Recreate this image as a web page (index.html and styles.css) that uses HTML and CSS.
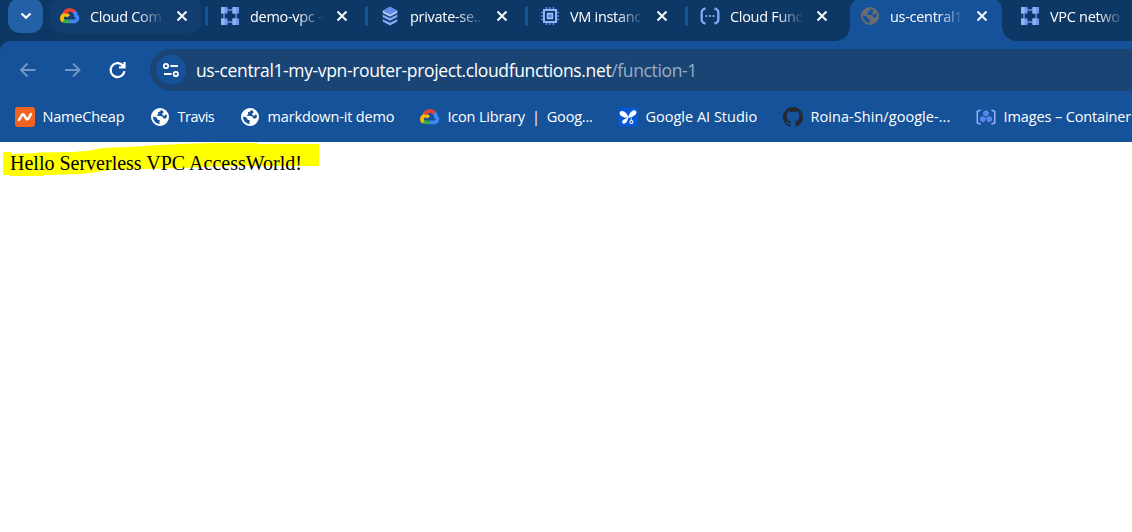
FILE: index.html
```html
<!DOCTYPE html>
<html lang="en">
<head>
<meta charset="utf-8">
<title>us-central1-my-vpn-router-project.cloudfunctions.net/function-1</title>
<link rel="stylesheet" href="styles.css">
</head>
<body>
<svg class="symbols" aria-hidden="true">
  <defs>
    <symbol id="cloud" viewBox="0 0 20 20">
      <g fill="none" stroke-width="3.800">
        <path stroke="#4285f4" d="M13.500 5.300Q15.900 7 15.900 9.600A3.100 3.100 0 0 1 14.900 15.300H10"/>
        <path stroke="#34a853" d="M10.200 15.300H5.600Q4.200 15.300 3.200 14.500"/>
        <path stroke="#fbbc04" d="M3.400 14.900A3.500 3.500 0 0 1 5.700 8.600Q7.500 8.700 8.600 10.300"/>
        <path stroke="#ea4335" d="M4.300 7.300A6.100 6.100 0 0 1 14.200 5.900"/>
      </g>
    </symbol>
    <symbol id="vpc" viewBox="0 0 20 20">
      <path fill="none" stroke="#6b95eb" stroke-width="1.500" d="M4 4h12v12H4z"/>
      <path fill="#7199ec" d="M1 1h6.500v6.500H1zM12.500 1H19v6.500h-6.500zM1 12.500h6.500V19H1zM12.500 12.500H19V19h-6.500z"/>
      <path fill="#92b0f3" d="M1 1h3.500v6.500H1zM12.500 1H16v6.500h-3.500zM1 12.500h3.500V19H1zM12.500 12.500H16V19h-3.500z"/>
    </symbol>
    <symbol id="stack" viewBox="0 0 20 20">
      <path fill="#85aaf5" d="m2.700 13.200 7.300 3.300 7.300-3.300v2.300L10 19.500l-7.300-4zM2.700 8.300l7.300 3.400 7.300-3.400v3L10 15.200l-7.300-3.900z"/>
      <path fill="#5f8cec" d="m10 .5 7.300 3.900L10 8.300 2.700 4.400z"/><path fill="#a8c5fa" d="M2.700 4.400 10 8.300l7.300-3.900v2.900L10 11.200 2.700 7.300z"/>
      <path fill="none" stroke="#0d3764" stroke-width="1.100" d="M2.700 7.800l7.300 3.700 7.300-3.700M2.700 11.900l7.300 3.700 7.300-3.700"/>
    </symbol>
    <symbol id="chip" viewBox="0 0 20 20">
      <path stroke="#5685ea" stroke-width="1.600" d="M6.500 1v18M10 1v18M13.500 1v18M1 6.500h18M1 10h18M1 13.500h18"/>
      <path fill="#0d3764" stroke="#91b4f8" stroke-width="2" d="M4 4h12v12H4z"/>
      <path fill="#5c8bee" stroke="#a6c3fa" stroke-width="1.300" d="M7.500 7.500h5v5h-5z"/>
    </symbol>
    <symbol id="func" viewBox="0 0 20 20">
      <path fill="none" stroke="#86a5f0" stroke-width="2.400" stroke-linejoin="round" d="M5.500 2.500 3.500 3.200Q1.700 4.300 1.700 6v8q0 1.700 1.800 2.800l2 .7M14.500 2.500l2 .7q1.800 1.100 1.800 2.800v8q0 1.700-1.800 2.800l-2 .7"/>
      <g fill="#91b3f8"><circle cx="6.500" cy="10" r="1.100"/><circle cx="10" cy="10" r="1.100"/><circle cx="13.500" cy="10" r="1.100"/></g>
    </symbol>
    <symbol id="globe" viewBox="0 0 20 20">
      <circle cx="10" cy="10" r="8" fill="none" stroke="currentColor" stroke-width="2"/>
      <path fill="currentColor" d="M2 9C3 4.500 6 2 11 2L10.600 4.200 8 5.300 8.200 7.300 6.300 8.800 11 8.900q2.300.4 2.300 2.500h2.200l2.600-2.500Q17.500 16 11.500 17.800L9.200 16l.8-2.500-2.400-.8L6.600 10.500z"/>
      <path fill="currentColor" d="M12 2.300Q16.500 3.500 17.700 8l-2.500-.5-.8 1.500-2.200-1 .4-2 1.200-.6z"/>
    </symbol>
    <symbol id="close" viewBox="0 0 12 12"><path fill="none" stroke="#fff" stroke-width="1.900" d="m1.500 1.500 9 9m0-9-9 9"/></symbol>
  </defs>
</svg>
<header class="browser">
  <nav class="tabs">
    <button class="tab-search" aria-label="Search tabs"><svg viewBox="0 0 12 8"><path d="m1.500 1.500 4.500 4.300 4.500-4.300"/></svg></button>
    <div class="tab hovered"><svg class="icon"><use href="#cloud"/></svg><span class="title">Cloud Com</span><svg class="close"><use href="#close"/></svg></div>
    <div class="tab divided"><svg class="icon"><use href="#vpc"/></svg><span class="title">demo-vpc –</span><svg class="close"><use href="#close"/></svg></div>
    <div class="tab divided"><svg class="icon"><use href="#stack"/></svg><span class="title">private-se..</span><svg class="close"><use href="#close"/></svg></div>
    <div class="tab divided"><svg class="icon"><use href="#chip"/></svg><span class="title">VM instanc</span><svg class="close"><use href="#close"/></svg></div>
    <div class="tab divided"><svg class="icon"><use href="#func"/></svg><span class="title">Cloud Func</span><svg class="close"><use href="#close"/></svg></div>
    <div class="tab active"><svg class="icon"><use href="#globe"/></svg><span class="title">us-central1</span><svg class="close"><use href="#close"/></svg></div>
    <div class="tab"><svg class="icon"><use href="#vpc"/></svg><span class="title">VPC netwo</span></div>
  </nav>
  <div class="chrome">
    <div class="toolbar">
      <svg class="nav dim" viewBox="0 0 20 20"><path d="M17.500 10H3M9.500 3.500 3 10l6.500 6.500"/></svg>
      <svg class="nav dim" viewBox="0 0 20 20"><path d="M2 10H16.500M10 3.500 16.500 10l-6.500 6.500"/></svg>
      <svg class="nav" viewBox="0 0 20 20"><path d="M16.500 11.200A7 7 0 1 1 14.500 5.100L16.500 7.200M16.500 2v5.400h-5.400"/></svg>
      <div class="address">
        <span class="site"><svg viewBox="0 0 18 16"><path d="M8.500 4h7.500M2 12h7.500"/><circle cx="4" cy="4" r="2.200"/><circle cx="13.800" cy="12" r="2.200"/></svg></span>
        <span class="url">us-central1-my-vpn-router-project.cloudfunctions.net<span class="path">/function-1</span></span>
      </div>
    </div>
    <div class="bookmarks">
      <a class="bookmark namecheap"><svg class="icon" viewBox="0 0 20 20"><rect width="20" height="20" rx="3" fill="#f26322"/><path fill="none" stroke="#fff" stroke-width="2.500" stroke-linecap="round" stroke-linejoin="round" d="m4 13 3-5.200q1-1.200 2 .2l2.200 3.700q1 1.300 2 .1L16 7"/></svg><span>NameCheap</span></a>
      <a class="bookmark travis"><svg class="icon"><use href="#globe"/></svg><span>Travis</span></a>
      <a class="bookmark markdown"><svg class="icon"><use href="#globe"/></svg><span>markdown-it demo</span></a>
      <a class="bookmark library"><svg class="icon"><use href="#cloud"/></svg><span>Icon Library&nbsp; |&nbsp; Goog...</span></a>
      <a class="bookmark studio"><svg class="icon" viewBox="0 0 20 20"><rect x=".5" y=".5" width="19" height="19" rx="1.500" fill="#0758d6"/><path fill="#fff" d="M10.500 10.800Q7 11.200 3.300 9C.5 6.800 1.500 3.700 4.500 4.100Q8.800 5 10.500 10.800ZM10 11q1-5.500 5-7.500c3-1 4.500 1.700 2.500 4.300Q14 11 10 11ZM10.300 10.800Q9.400 15.200 6.700 16.600c-2.700.7-3.400-2.200-1.200-3.900Q7.500 11.300 10.300 10.800Z"/><circle cx="13.400" cy="15" r="1.500" fill="#0758d6" stroke="#fff" stroke-width="1.100"/><circle cx="13.300" cy="12" r=".8" fill="#fff"/></svg><span>Google AI Studio</span></a>
      <a class="bookmark github"><svg class="icon" viewBox="0 0 16 16"><path fill="#24292f" d="M8 0C3.580 0 0 3.580 0 8c0 3.540 2.290 6.530 5.470 7.590.4.070.55-.17.55-.38 0-.19-.01-.82-.01-1.490-2.010.37-2.530-.49-2.690-.94-.09-.23-.48-.94-.82-1.130-.28-.15-.68-.52-.01-.53.63-.01 1.080.58 1.230.82.72 1.210 1.870.87 2.330.66.070-.52.28-.87.51-1.070-1.780-.2-3.640-.89-3.640-3.950 0-.87.31-1.590.82-2.150-.08-.2-.36-1.020.08-2.120 0 0 .67-.21 2.200.82.64-.18 1.320-.27 2-.27s1.360.09 2 .27c1.530-1.040 2.200-.82 2.200-.82.44 1.100.16 1.920.08 2.120.51.56.82 1.270.82 2.150 0 3.070-1.870 3.750-3.650 3.950.29.25.54.73.54 1.480 0 1.070-.01 1.930-.01 2.200 0 .21.15.46.55.38A8.010 8.010 0 0 0 16 8c0-4.420-3.580-8-8-8z"/></svg><span>Roina-Shin/google-...</span></a>
      <a class="bookmark images"><svg class="icon" viewBox="0 0 20 20"><path fill="none" stroke="#8eafff" stroke-width="1.600" d="M4.500 3 1.300 4.500v11.200l3.200 1.600M15.500 3l3.200 1.500v11.200l-3.200 1.600"/><g fill="#4f83f1" stroke="#86a8fa" stroke-width=".6"><path d="m10 3.700 2.300 1.200v2.700L10 8.900 7.700 7.600V4.900zM6.800 9.500l2.300 1.200v2.700l-2.300 1.300-2.300-1.300v-2.700zM13.200 9.500l2.300 1.200v2.700l-2.300 1.300-2.300-1.300v-2.700z"/></g></svg><span>Images – Container</span></a>
    </div>
  </div>
</header>
<main class="page">
  <svg class="marker" viewBox="0 0 330 40"><path fill="#ff0" d="M3 10h8l1 2 24-1 1-.5 36-.5 17-1.500 12-2.500 35-1.500 22-1.500 33-1.500 21-.500h44l1 1h61V24h-86l-19 .5-32 1.500-33 1-29 .5-14 1-16 2.500-9 1-37 1-1 1H9V33H3z"/></svg>
  <p class="message">Hello Serverless VPC AccessWorld!</p>
</main>
</body>
</html>
```
FILE: styles.css
```css
* { box-sizing: border-box; }
body { margin: 0; height: 532px; overflow: hidden; background: #fff; font-family: "Open Sans", "Noto Sans", sans-serif; color: #fff; }
svg { display: block; flex: none; }
.symbols { position: absolute; width: 0; height: 0; }
.browser { width: 1132px; overflow: hidden; background: #0d3764; }
.tabs { display: flex; height: 41px; padding-left: 8px; }
.tab-search { display: flex; flex: none; align-items: center; justify-content: center; width: 35px; height: 35px; margin: -2px 7px 0 0; padding: 0; border: 0; border-radius: 12px; background: #2460a5; }
.tab-search svg { width: 12px; height: 8px; fill: none; stroke: #fff; stroke-width: 2.2; }
.tab { position: relative; display: flex; flex: none; align-items: center; width: 152px; height: 35px; margin: -2px 8px 0 0; padding: 1px 0 0 10px; border-radius: 12px; }
.tab.hovered { background: #123d6f; }
.tab .icon { width: 20px; height: 20px; margin-right: 10px; }
.tab .title { width: 74px; margin-right: 12px; padding-top: 1px; overflow: hidden; white-space: nowrap; font-size: 14.5px; line-height: 22px; letter-spacing: -.3px; -webkit-mask-image: linear-gradient(90deg, #000 64%, transparent); mask-image: linear-gradient(90deg, #000 64%, transparent); }
.tab .close { width: 12px; height: 12px; }
.divided::after, .hovered::after { content: ""; position: absolute; left: 155px; top: 8px; width: 3px; height: 20px; border-radius: 2px; background: #15539a; }
.tab:nth-child(6)::after { display: none; }
.tab.active { height: 43px; padding-bottom: 8px; border-radius: 12px 12px 0 0; background: #155299; }
.tab.active .icon { color: #696d72; }
.active::before, .active::after { content: ""; position: absolute; bottom: 0; width: 14px; height: 14px; }
.active::before { left: -14px; background: radial-gradient(circle at 0 0, transparent 13.5px, #155299 14px); }
.active::after { right: -14px; background: radial-gradient(circle at 100% 0, transparent 13.5px, #155299 14px); }
.chrome { height: 101px; border-radius: 10px 0 0; background: #155299; }
.toolbar { display: flex; align-items: center; height: 50px; padding: 8px 0 0 18px; }
.nav { width: 20px; height: 20px; margin-right: 25px; fill: none; stroke: #fff; stroke-width: 2.2; }
.nav.dim { stroke: #7396c2; stroke-width: 1.9; }
.address { display: flex; flex: 1; align-items: center; height: 42px; margin-left: -3px; padding-left: 6px; border-radius: 21px 0 0 21px; background: #1a4474; }
.site { display: flex; align-items: center; justify-content: center; width: 30px; height: 30px; margin-right: 10px; border-radius: 50%; background: #155299; }
.site svg { width: 18px; height: 16px; fill: none; stroke: #fff; stroke-width: 1.8; }
.url { font-size: 17.5px; line-height: 28px; letter-spacing: -.37px; white-space: nowrap; }
.path { color: #9badc5; }
.bookmarks { display: flex; align-items: center; height: 51px; padding-left: 15px; }
.bookmark { display: flex; flex: none; align-items: center; gap: 7.5px; white-space: nowrap; font-size: 14.5px; line-height: 22px; letter-spacing: -.2px; }
.bookmark .icon { width: 20px; height: 20px; }
.namecheap { width: 135px; }
.travis { width: 90px; letter-spacing: -.5px; }
.markdown { width: 180px; letter-spacing: -.14px; }
.library { width: 198px; }
.studio { width: 165px; letter-spacing: 0; }
.github { width: 193px; letter-spacing: .05px; }
.images { letter-spacing: -.12px; }
.page { position: relative; color: #000; }
.marker { position: absolute; left: 0; top: 0; width: 330px; height: 40px; }
.message { position: relative; margin: 0; padding: 10px 10px 0; font: 20px/23px "Liberation Serif", serif; }
```
